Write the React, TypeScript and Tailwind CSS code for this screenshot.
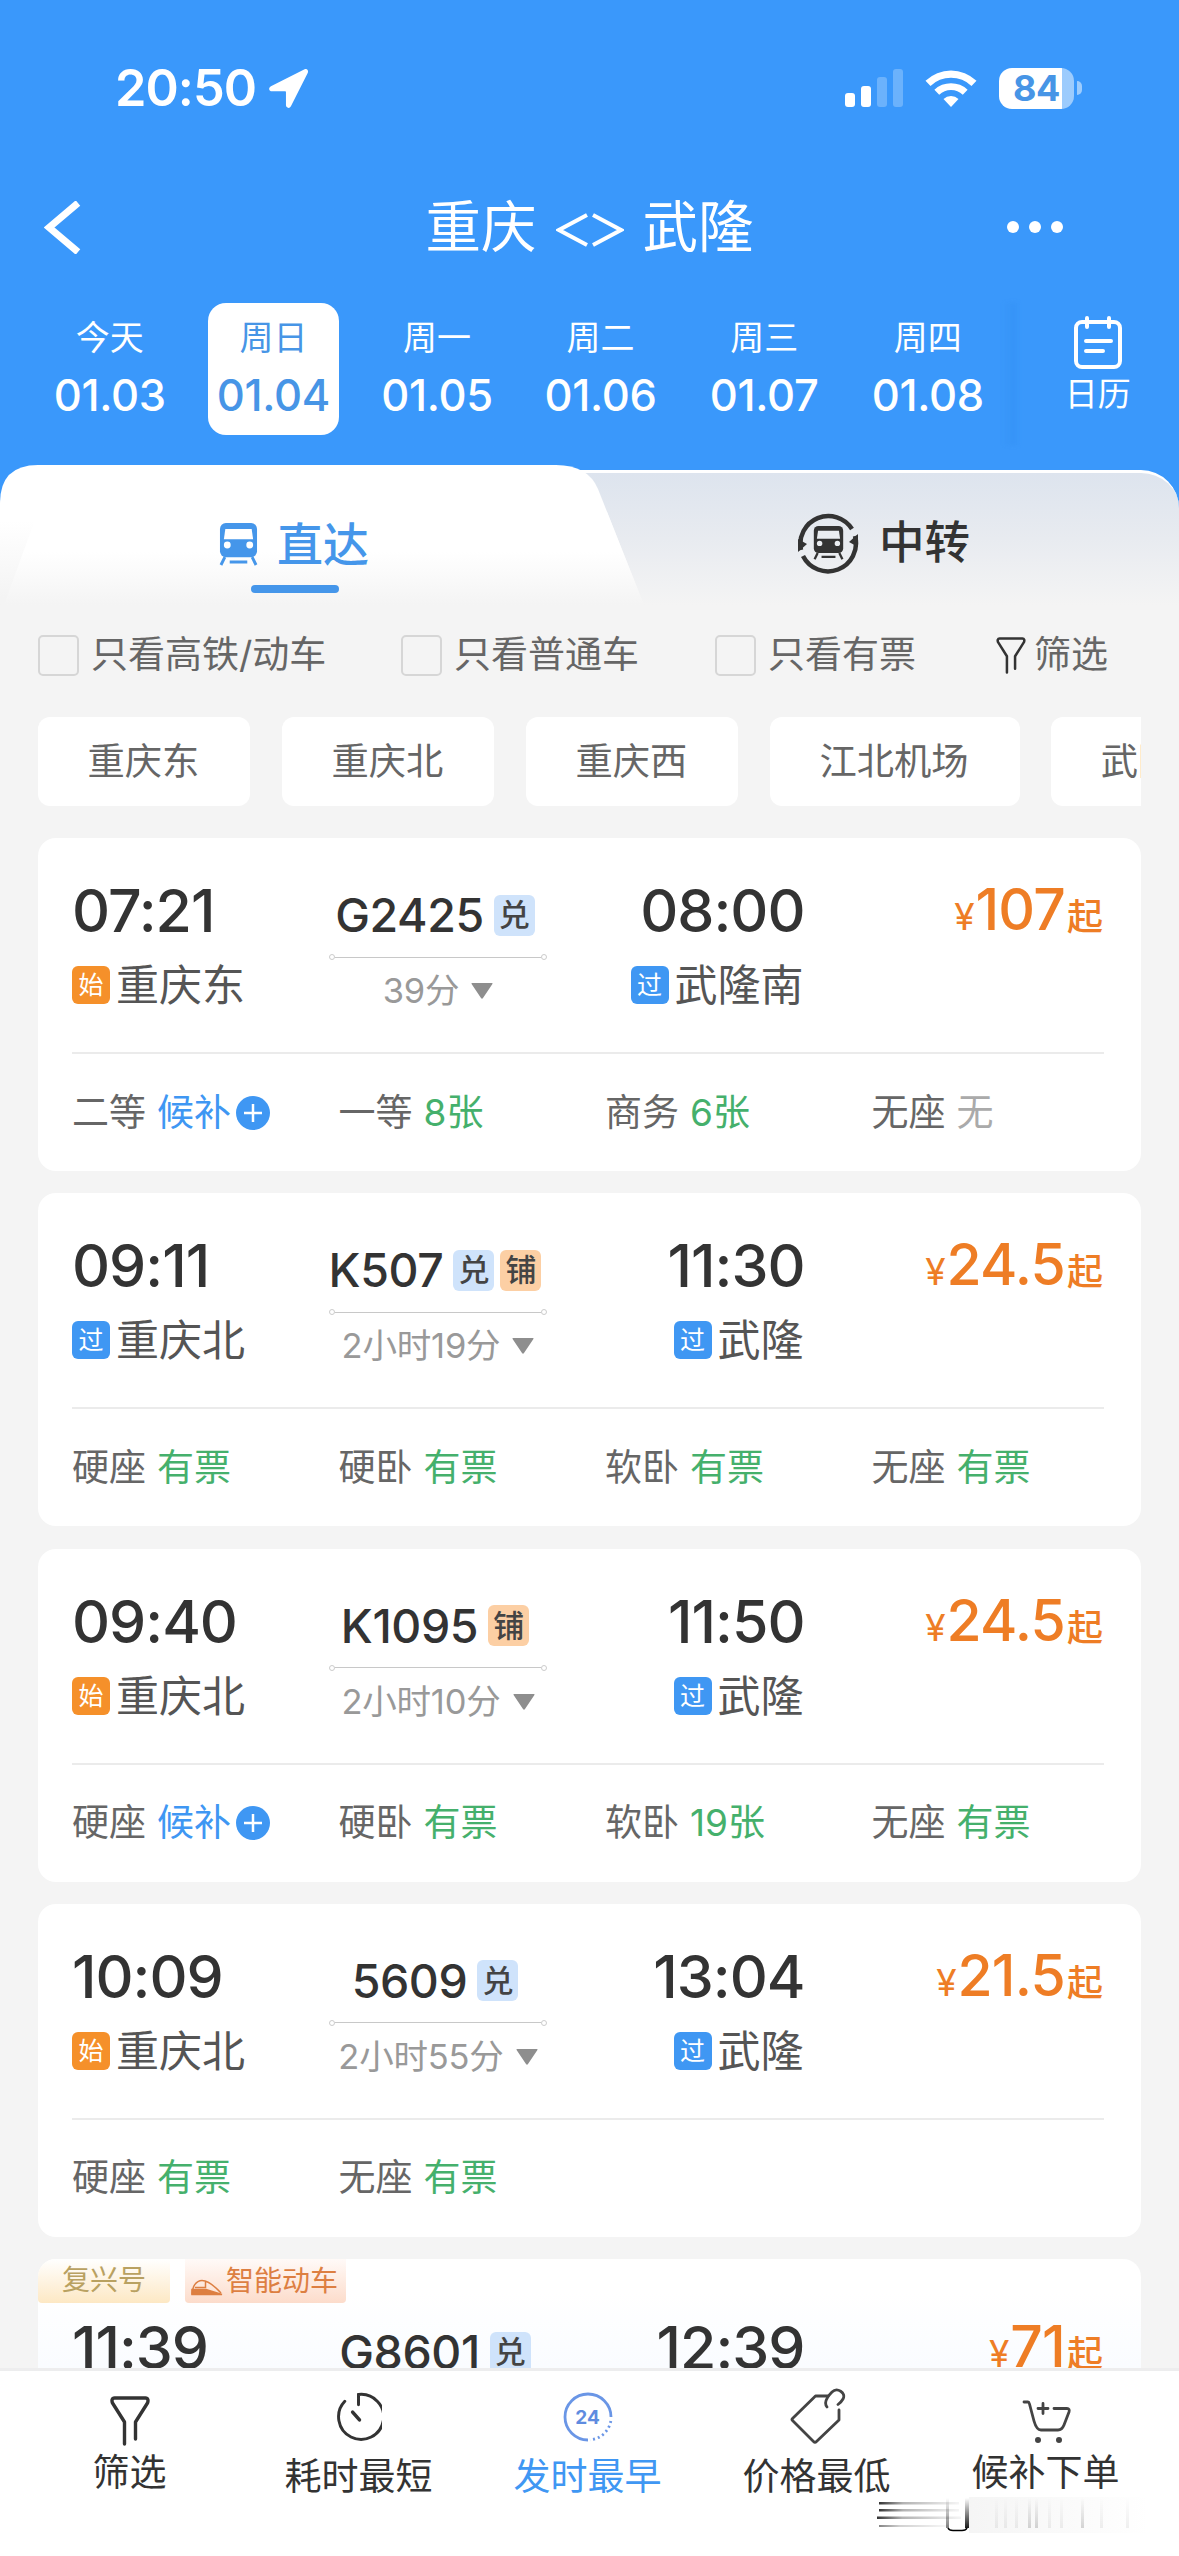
import { useState } from "react";
import type { ReactNode } from "react";
import clsx from "clsx";

type Mark = "始" | "过";

type Seat = { name: string; value: string };

type Train = {
  no: string;
  depart: string;
  arrive: string;
  from: string;
  fromMark: Mark;
  to: string;
  toMark: Mark;
  duration: string;
  price: string;
  badges: string[];
  seats: Seat[];
  featured?: boolean;
};

const dates = [
  { label: "今天", date: "01.03" },
  { label: "周日", date: "01.04" },
  { label: "周一", date: "01.05" },
  { label: "周二", date: "01.06" },
  { label: "周三", date: "01.07" },
  { label: "周四", date: "01.08" },
];

const trains: Train[] = [
  {
    no: "G2425",
    depart: "07:21",
    arrive: "08:00",
    from: "重庆东",
    fromMark: "始",
    to: "武隆南",
    toMark: "过",
    duration: "39分",
    price: "107",
    badges: ["兑"],
    seats: [
      { name: "二等", value: "候补" },
      { name: "一等", value: "8张" },
      { name: "商务", value: "6张" },
      { name: "无座", value: "无" },
    ],
  },
  {
    no: "K507",
    depart: "09:11",
    arrive: "11:30",
    from: "重庆北",
    fromMark: "过",
    to: "武隆",
    toMark: "过",
    duration: "2小时19分",
    price: "24.5",
    badges: ["兑", "铺"],
    seats: [
      { name: "硬座", value: "有票" },
      { name: "硬卧", value: "有票" },
      { name: "软卧", value: "有票" },
      { name: "无座", value: "有票" },
    ],
  },
  {
    no: "K1095",
    depart: "09:40",
    arrive: "11:50",
    from: "重庆北",
    fromMark: "始",
    to: "武隆",
    toMark: "过",
    duration: "2小时10分",
    price: "24.5",
    badges: ["铺"],
    seats: [
      { name: "硬座", value: "候补" },
      { name: "硬卧", value: "有票" },
      { name: "软卧", value: "19张" },
      { name: "无座", value: "有票" },
    ],
  },
  {
    no: "5609",
    depart: "10:09",
    arrive: "13:04",
    from: "重庆北",
    fromMark: "始",
    to: "武隆",
    toMark: "过",
    duration: "2小时55分",
    price: "21.5",
    badges: ["兑"],
    seats: [
      { name: "硬座", value: "有票" },
      { name: "无座", value: "有票" },
    ],
  },
  {
    no: "G8601",
    depart: "11:39",
    arrive: "12:39",
    from: "重庆北",
    fromMark: "始",
    to: "武隆南",
    toMark: "过",
    duration: "1小时",
    price: "71",
    badges: ["兑"],
    seats: [],
    featured: true,
  },
];

function StatusBar() {
  return (
    <div className="flex h-[176px] items-center pl-[115px] pr-[98px] text-white">
      <span className="text-[50.5px] font-semibold leading-[60px] tracking-[-1px]">20:50</span>
      <svg className="ml-[12px]" width="41" height="41" viewBox="0 0 42 42" fill="currentColor">
        <path d="M37.5 1.2 3 18.6c-3 1.6-2 5.2 1 5.2h13.6c.5 0 .8.3.8.8V38c0 3.200 3.800 4 5.200 1L40.800 4.800c1-2.400-.9-4.700-3.300-3.600Z" />
      </svg>
      <svg className="ml-auto" width="58" height="38" viewBox="0 0 58 38" fill="currentColor">
        <rect x="0" y="24" width="10" height="14" rx="3" />
        <rect x="16" y="17" width="10" height="21" rx="3" />
        <rect x="32" y="8" width="10" height="30" rx="3" opacity=".25" />
        <rect x="48" y="0" width="10" height="38" rx="3" opacity=".25" />
      </svg>
      <svg className="ml-[22px]" width="52" height="38" viewBox="0 0 52 38" fill="currentColor">
        <path d="M26 38 33.500 30a11 11 0 0 0-15 0Z" />
        <path d="M14.200 25.800a17 17 0 0 1 23.600 0l4.800-5a24 24 0 0 0-33.200 0Z" />
        <path d="M5.500 17a29.500 29.500 0 0 1 41 0l5-5.200a36.700 36.700 0 0 0-51 0Z" />
      </svg>
      <div className="ml-[22px] flex h-[41px] w-[75px] items-center justify-center rounded-[13px] bg-linear-to-r from-white from-84% to-white/50 to-84% text-[36px] font-bold leading-[41px] tracking-[-0.5px] text-[#4795e6]">
        <span>84</span>
      </div>
      <div className="-mr-px ml-[3px] h-[14px] w-[5px] rounded-r-full bg-white/50" />
    </div>
  );
}

function TitleBar() {
  return (
    <div className="grid h-[102px] grid-cols-[1fr_auto_1fr] items-center pl-[44px] pr-[116px] text-white">
      <svg width="37" height="53" viewBox="0 0 37 53" fill="none" stroke="currentColor" strokeWidth="7">
        <path d="M34 2 5 26.500 34 51" />
      </svg>
      <div className="flex translate-x-[36px] items-center gap-[19px] text-[55.500px] leading-[64px]">
        <span>重庆</span>
        <svg className="mt-[6px]" width="68" height="34" viewBox="0 0 68 34" fill="none" stroke="currentColor" strokeWidth="4">
          <path d="M31 2 3 17 31 32M37 2 65 17 37 32" />
        </svg>
        <span>武隆</span>
      </div>
      <div className="flex justify-end gap-[10px]">
        <i className="size-[12px] rounded-full bg-white" />
        <i className="size-[12px] rounded-full bg-white" />
        <i className="size-[12px] rounded-full bg-white" />
      </div>
    </div>
  );
}

function DateStrip() {
  const [active, setActive] = useState(1);

  return (
    <div className="flex h-[157px] pl-[28px] pt-[25px]">
      {dates.map((d, i) => (
        <button
          key={d.date}
          type="button"
          onClick={() => setActive(i)}
          className={clsx(
            "mx-[16px] flex h-[132px] w-[131.6px] shrink-0 flex-col items-center rounded-[18px] pt-[15px]",
            i === active ? "bg-white text-[#4795e6]" : "text-white"
          )}
        >
          <span className="text-[34px] leading-[40px]">{d.label}</span>
          <span className="mt-[14px] text-[43.5px] font-medium leading-[46px] tracking-[-0.3px]">{d.date}</span>
        </button>
      ))}
      <div className="h-[142px] w-[14px] -translate-x-[7px] bg-linear-to-r from-transparent to-[#2f8cf0]/40 blur-[2px]" />
      <div className="flex flex-1 flex-col items-center pr-[7px] pt-[12px] text-white">
        <svg width="50" height="56" viewBox="0 0 50 56" fill="none" stroke="currentColor" strokeWidth="4" strokeLinecap="round">
          <rect x="3" y="7" width="44" height="45" rx="6" />
          <path d="M14 3v9M36 3v9" />
          <path d="M13 26h25M13 36h17" />
        </svg>
        <span className="mt-[4px] text-[33px] leading-[38px]">日历</span>
      </div>
    </div>
  );
}

function TrainGlyph({ className, hole }: { className: string; hole: string }) {
  return (
    <svg className={className} viewBox="0 0 40 44" fill="none">
      <rect x="1" y="0" width="38" height="35" rx="6" fill="currentColor" />
      <path d="M6.500 6h27l1.500 10.500H5Z" fill={hole} />
      <circle cx="8.500" cy="22.500" r="3.500" fill={hole} />
      <circle cx="31.500" cy="22.500" r="3.500" fill={hole} />
      <path d="M6 35 2 43M34 35l4 8M11 40h18" stroke="currentColor" strokeWidth="3" />
    </svg>
  );
}

function TypeTabs() {
  return (
    <div className="relative h-[140px]">
      {/* transfer tab sits behind, the direct tab overlaps it with a slanted edge */}
      <div className="absolute inset-x-0 bottom-0 top-[5px] rounded-t-[38px] border-t-[3px] border-white bg-linear-to-b from-[#dde4ee] via-[#e8ebf0] via-50% to-[#f4f4f4]" />
      <div className="absolute inset-0 bg-linear-to-b from-white from-40% to-[#f4f4f4] to-95% [clip-path:path('M0_38Q0_0_38_0H556Q588_0_598_24L644_140H0Z')]" />
      <div className="absolute inset-0 bg-linear-to-b from-white from-62% to-[#f4f4f4] [clip-path:path('M44_30L4_140H644L607_47Z')]" />
      <div className="relative flex h-full">
        <div className="flex w-[590px] flex-col items-center">
          <div className="mt-[53px] flex h-[52px] -translate-x-px items-center gap-[19px] text-[46px] font-medium leading-[52px] text-[#4596ea]">
            <TrainGlyph className="h-[43px] w-[39px]" hole="#fff" />
            <span>直达</span>
          </div>
          <div className="mt-[15px] h-[8px] w-[88px] rounded-full bg-[#4596ea]" />
        </div>
        <div className="mt-[52px] flex h-[52px] flex-1 items-center pl-[207px] text-[45.5px] font-medium leading-[52px] text-[#333]">
          <div className="relative -mt-px flex size-[62px] items-center justify-center">
            <svg className="absolute inset-0" viewBox="0 0 62 62" fill="none" stroke="currentColor" strokeWidth="4.500">
              <path d="M4 38A28 28 0 0 1 55 17" />
              <path d="M58 24A28 28 0 0 1 6 44" />
              <path d="M1 27v13l9-8Z" fill="currentColor" stroke="none" />
              <path d="M61 35V22l-9 8Z" fill="currentColor" stroke="none" />
            </svg>
            <TrainGlyph className="h-[34px] w-[31px]" hole="#eaedf1" />
          </div>
          <span className="ml-[20px]">中转</span>
        </div>
      </div>
    </div>
  );
}

function CheckFilter({ label, className }: { label: string; className: string }) {
  return (
    <label className={clsx("flex shrink-0 items-center", className)}>
      <span className="size-[41px] shrink-0 rounded-[5px] border-2 border-[#d6d6d6]" />
      <span className="ml-[12px] whitespace-nowrap">{label}</span>
    </label>
  );
}

function Filters() {
  return (
    <>
      <div className="flex h-[100px] items-center pl-[38px] text-[37px] leading-[44px] text-[#666]">
        <CheckFilter label="只看高铁/动车" className="w-[363px]" />
        <CheckFilter label="只看普通车" className="w-[314px]" />
        <CheckFilter label="只看有票" className="w-[281px]" />
        <FunnelIcon className="h-[37px] w-[30px]" />
        <span className="ml-[8px]">筛选</span>
      </div>
      <div className="mx-[38px] mt-[12px] flex gap-[31.600px] overflow-hidden text-[37.3px] leading-[44px] text-[#666]">
        {["重庆东", "重庆北", "重庆西", "江北机场", "武隆"].map((name) => (
          <button key={name} type="button" className="h-[89px] shrink-0 rounded-[12px] bg-white pl-[49.5px] pr-[51px]">
            {name}
          </button>
        ))}
      </div>
    </>
  );
}

function FunnelIcon({ className }: { className: string }) {
  return (
    <svg className={className} viewBox="0 0 40 50" fill="none" stroke="#333" strokeWidth="3.400" strokeLinecap="round" strokeLinejoin="round">
      <path d="M14.500 48V26L2.500 7C1.500 4.500 2 2 4.500 2h31c2.500 0 3 2.500 2 5l-12 19v17" />
    </svg>
  );
}

function StationMark({ mark }: { mark: Mark }) {
  return (
    <span
      className={clsx(
        "flex size-[38px] items-center justify-center rounded-[6px] text-[25px] leading-[38px] text-white",
        mark === "始" ? "bg-[#f5902a]" : "bg-[#3f97f3]"
      )}
    >
      {mark}
    </span>
  );
}

function Badge({ text }: { text: string }) {
  return (
    <span
      className={clsx(
        "flex size-[41px] items-center justify-center rounded-[6px] text-[31px] font-medium leading-[40px] text-[#444]",
        text === "兑" ? "bg-[#cfe3fb]" : "bg-[#fccfa4]"
      )}
    >
      {text}
    </span>
  );
}

function SeatCell({ seat }: { seat: Seat }) {
  const waitlist = seat.value === "候补";
  const none = seat.value === "无";

  return (
    <div className="flex items-center">
      <span className="text-[#666]">{seat.name}</span>
      <span
        className={clsx("ml-[11px]", waitlist ? "text-[#3f97f3]" : none ? "text-[#aaa]" : "text-[#45b06c]")}
      >
        {seat.value}
      </span>
      {waitlist && (
        <svg className="ml-[5px]" width="34" height="34" viewBox="0 0 34 34">
          <circle cx="17" cy="17" r="17" fill="#3f97f3" />
          <path d="M8 17h18M17 8v18" stroke="#fff" strokeWidth="2.500" />
        </svg>
      )}
    </div>
  );
}

function FeatureTags() {
  return (
    <div className="flex h-[44px] gap-[15px] text-[28px] leading-[42px]">
      <span className="w-[132px] rounded-b-[4px] bg-linear-to-b from-white to-[#fde8c4] text-center text-[#b9a161]">
        <span>复兴号</span>
      </span>
      <span className="flex w-[161px] items-center rounded-b-[4px] bg-linear-to-b from-[#fffaf8] to-[#fcdccb] pl-[6px] text-[#dd7f42]">
        <svg className="mt-[13px]" width="32" height="17" viewBox="0 0 32 17" fill="none" stroke="currentColor" strokeWidth="1.500">
          <path d="M1 15.500C1 8 5 1.500 11 1.500c6 0 13 6 19 12.500M4 8.500h10.500V3" />
          <path d="M1 10.500h14L31 15.500H1Z" fill="currentColor" />
        </svg>
        <span className="ml-[3px]">智能动车</span>
      </span>
    </div>
  );
}

function TrainCard({ train }: { train: Train }) {
  return (
    <div
      className={clsx(
        "h-[333px] shrink-0 overflow-hidden rounded-[18px]",
        train.featured ? "bg-linear-to-b from-white from-10% to-[#f8fbff] to-40%" : "bg-white"
      )}
    >
      {train.featured && <FeatureTags />}
      <div className={clsx("flex h-[214px] pl-[34px] pr-[38px]", train.featured && "-mt-[28px]")}>
        <div className="w-[257px] pt-[43px]">
          <div className="text-[59px] font-medium leading-[60px] tracking-[-1px] text-[#333]">{train.depart}</div>
          <div className="mt-[22px] flex h-[44px] items-center gap-[6px] text-[43px] leading-[44px] text-[#555]">
            <StationMark mark={train.fromMark} />
            <span>{train.from}</span>
          </div>
        </div>

        <div className="flex w-[218px] flex-col items-center pt-[52px]">
          <div className="flex h-[50px] -translate-x-[3px] items-center whitespace-nowrap text-[46.5px] leading-[50px] text-[#333]">
            <span className="mr-[10px] font-medium tracking-[-0.4px]">{train.no}</span>
            <div className="flex gap-[6px]">
              {train.badges.map((b) => (
                <Badge key={b} text={b} />
              ))}
            </div>
          </div>
          <div className="mt-[13px] flex h-[8px] w-full items-center">
            <i className="size-[6px] rounded-full border border-[#ccc]" />
            <i className="h-px flex-1 bg-[#c8c8c8]" />
            <i className="size-[6px] rounded-full border border-[#ccc]" />
          </div>
          <div className="mt-[12px] flex h-[36px] items-center whitespace-nowrap text-[34.5px] leading-[36px] tracking-[-0.2px] text-[#999]">
            <span>{train.duration}</span>
            <svg className="ml-[12px]" width="22" height="16" viewBox="0 0 22 16" fill="#8e8e8e">
              <path d="M1 0h20q1 0 .4 1L12 15q-1 1.500-2 0L.600 1Q0 0 1 0Z" />
            </svg>
          </div>
        </div>

        <div className="flex w-[256.5px] flex-col items-end pt-[43px]">
          <div className="-mr-px text-[59px] font-medium leading-[60px] tracking-[-1px] text-[#333]">{train.arrive}</div>
          <div className="mt-[22px] flex h-[44px] items-center gap-[6px] text-[43px] leading-[44px] text-[#555]">
            <StationMark mark={train.toMark} />
            <span>{train.to}</span>
          </div>
        </div>

        <div className="flex flex-1 items-baseline justify-end pt-[42px] font-medium leading-[60px] text-[#ee7d25]">
          <span className="text-[37px] font-normal">¥</span>
          <span className="ml-px text-[57px] leading-[60px] tracking-[-0.8px]">{train.price}</span>
          <span className="ml-[2px] text-[36px]">起</span>
        </div>
      </div>
      <div className="ml-[34px] mr-[37px] h-[2px] bg-[#ebebeb]" />
      <div className="grid h-[117px] grid-cols-[repeat(4,266.5px)] items-center pl-[34px] text-[37px] leading-[44px]">
        {train.seats.map((s) => (
          <SeatCell key={s.name} seat={s} />
        ))}
      </div>
    </div>
  );
}

function NavItem({ icon, label, active, raised }: { icon: ReactNode; label: string; active?: boolean; raised?: boolean }) {
  return (
    <button
      type="button"
      className={clsx(
        "flex w-[229px] shrink-0 flex-col items-center text-[37px] leading-[44px]",
        active ? "text-[#3f97f3]" : "text-[#333]"
      )}
    >
      <span className="flex h-[94px] items-center justify-center">{icon}</span>
      <span className={raised ? "-mt-[14px]" : "-mt-[10px]"}>{label}</span>
    </button>
  );
}

function BottomBar() {
  return (
    <div className="relative flex h-[188px] border-t-[3px] border-[#ededee] bg-white pl-[15px]">
      <NavItem raised label="筛选" icon={<FunnelIcon className="mt-[6px] h-[50px] w-[40px]" />} />
      <NavItem
        label="耗时最短"
        icon={
          <svg className="-mt-[2px]" width="47" height="51" viewBox="0 0 48 52" fill="none" stroke="#333" strokeWidth="3" strokeLinecap="round">
            <path d="M24 13V2.500A23 23 0 1 1 10 9.500" />
            <path d="M18 20.500l7 8" strokeWidth="3.600" />
          </svg>
        }
      />
      <NavItem
        active
        label="发时最早"
        icon={
          <span className="relative -mt-[2px] flex size-[50px] items-center justify-center text-[19px] font-bold leading-none text-[#5f8ce0]">
            <svg className="absolute inset-0" viewBox="0 0 50 50" fill="none" stroke="#6a96e6" strokeWidth="2.800">
              <path d="M48 25A23 23 0 1 0 25 48" />
              <path d="M47.800 29A23 23 0 0 1 27 47.900" strokeDasharray="2 3" />
            </svg>
            24
          </span>
        }
      />
      <NavItem
        label="价格最低"
        icon={
          <svg className="mb-[4px] ml-[2px]" width="56" height="56" viewBox="0 0 56 56" fill="none" stroke="#444" strokeWidth="2.800" strokeLinecap="round" strokeLinejoin="round">
            <path d="M38 8H25.500L2.500 30.500Q1.500 31.500 2.500 32.500L23.500 53.500Q25 55 26.500 53.500L49 32V22" />
            <path d="M37 19C33.500 14.500 37 9 42 4c5-5 14.500.5 11 7-1.500 2.800-3 4-5 5.500" />
          </svg>
        }
      />
      <NavItem
        raised
        label="候补下单"
        icon={
          <svg className="mt-[7px] ml-[3px]" width="50" height="46" viewBox="0 0 50 46" fill="none" stroke="#444" strokeWidth="2.800" strokeLinecap="round" strokeLinejoin="round">
            <path d="M2 3h4q1 0 1.500 2l4.500 17q2.500 9 7 9h17q4 0 6-5l5-13q1-3.500-2-3.500H32M16 9.500h10M21 4.500v10" />
            <circle cx="16" cy="41" r="3" fill="#444" stroke="none" />
            <circle cx="37" cy="41" r="3" fill="#444" stroke="none" />
          </svg>
        }
      />
      <Smear />
    </div>
  );
}

function Smear() {
  return (
    <svg className="absolute left-[876px] top-[123px]" width="280" height="44" viewBox="0 0 280 44" fill="none">
      <defs>
        <linearGradient id="streak" x1="0" x2="1" y1="0" y2="0">
          <stop offset="0" stopColor="#000" stopOpacity=".8" />
          <stop offset=".3" stopColor="#000" stopOpacity=".3" />
          <stop offset="1" stopColor="#000" stopOpacity="0.040" />
        </linearGradient>
        <linearGradient id="drop" x1="0" x2="0" y1="0" y2="1">
          <stop offset="0" stopColor="#000" stopOpacity="0" />
          <stop offset="1" stopColor="#000" />
        </linearGradient>
        <linearGradient id="haze" x1="0" x2="1" y1="0" y2="0">
          <stop offset="0" stopColor="#999" stopOpacity=".2" />
          <stop offset="1" stopColor="#999" stopOpacity="0" />
        </linearGradient>
      </defs>
      <rect x="3" y="8" width="80" height="2.500" fill="url(#streak)" />
      <rect x="3" y="15" width="80" height="2.500" fill="url(#streak)" />
      <rect x="1" y="22.500" width="84" height="2.500" fill="url(#streak)" />
      <rect x="3" y="31" width="70" height="2" fill="url(#streak)" opacity=".6" />
      <rect x="70" y="4" width="3" height="30" fill="url(#drop)" opacity=".5" />
      <rect x="89" y="4" width="4" height="30" fill="url(#drop)" opacity=".9" />
      <path d="M72 34q1 2.500 5 2.500h9q4 0 5-2.500" stroke="#000" strokeWidth="1.500" />
      <rect x="93" y="3" width="180" height="36" fill="url(#haze)" opacity=".5" />
      {[152, 159, 205].map((x) => (
        <rect key={x} x={x} y="4" width="3" height="30" fill="url(#drop)" opacity=".16" />
      ))}
      {[119, 128, 139, 172, 184, 224, 250].map((x) => (
        <rect key={x} x={x} y="4" width="3" height="30" fill="url(#drop)" opacity=".06" />
      ))}
    </svg>
  );
}

export default function App() {
  return (
    <div className="flex h-[2556px] w-[1179px] flex-col overflow-hidden bg-[#f4f4f4] font-['Inter','Noto_Sans_CJK_SC',sans-serif]">
      <div className="h-[605px] shrink-0 bg-linear-to-b from-[#3a98fb] from-90% to-[#f4f4f4] to-90%">
        <StatusBar />
        <TitleBar />
        <DateStrip />
        <div className="mt-[30px]">
          <TypeTabs />
        </div>
      </div>
      <Filters />
      <div className="mx-[38px] mt-[32px] flex h-[1530px] flex-col gap-[22.300px] overflow-hidden">
        {trains.map((t) => (
          <TrainCard key={t.no} train={t} />
        ))}
      </div>
      <BottomBar />
    </div>
  );
}
